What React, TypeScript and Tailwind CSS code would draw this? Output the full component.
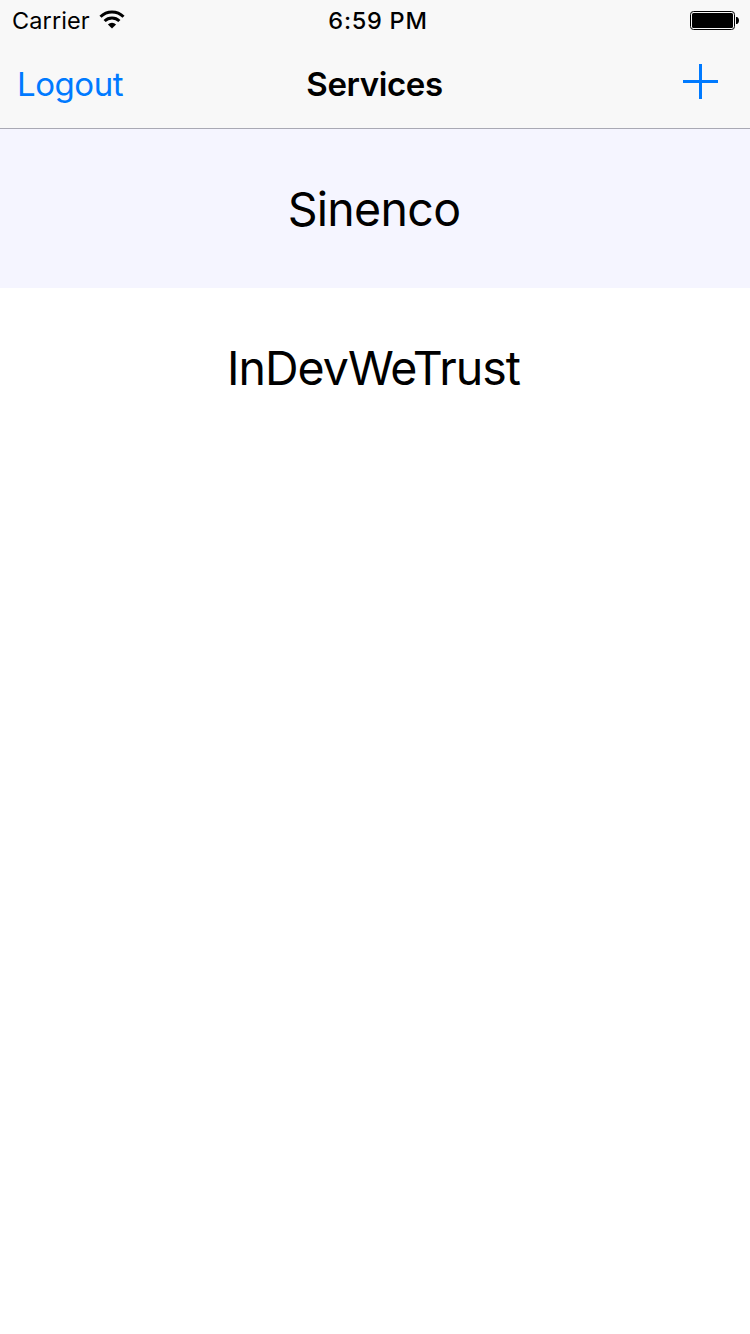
export default function App() {
  return (
    <div className="flex h-[1334px] w-[750px] flex-col bg-white font-['Inter',sans-serif] text-black">
      <header className="flex h-[129px] flex-col border-b border-[#a9a9b4] bg-[#f8f8f8]">
        <div className="grid h-10 grid-cols-[1fr_auto_1fr] items-center pr-[11px] pl-3">
          <div className="flex items-center gap-[9px]">
            <span className="pt-[2px] text-[23.5px] leading-[38px] tracking-[0.1px]">Carrier</span>
            <svg width="26" height="20" viewBox="0 0 26 20" fill="none" stroke="#000" strokeWidth="3">
              <path d="M1.5 6.8a16.3 16.3 0 0 1 23 0" />
              <path d="M5.6 11a10.5 10.5 0 0 1 14.8 0" />
              <path d="M13 18.5l-4.1-4.1a6 6 0 0 1 8.2 0z" fill="#000" stroke="none" />
            </svg>
          </div>
          <span className="pt-[2px] pl-[5px] text-center text-[23.5px] leading-[38px] font-medium tracking-[0.75px]">
            6:59 PM
          </span>
          <svg className="justify-self-end" width="49" height="19" viewBox="0 0 49 19">
            <rect x="0.5" y="0.5" width="44" height="18" rx="3" fill="none" stroke="#000" />
            <rect x="2" y="2" width="41" height="15" rx="1.5" />
            <path d="M46 6h1.2c2.4 1.5 2.4 5.5 0 7H46z" />
          </svg>
        </div>
        <nav className="grid h-[88px] grid-cols-[1fr_auto_1fr] items-center pr-8 pl-[17px]">
          <button className="pt-[2px] text-left text-[33px] tracking-[-0.45px] text-[#007aff]">Logout</button>
          <h1 className="pt-[2px] pl-[14px] text-center text-[33px] font-semibold tracking-[-0.4px]">Services</h1>
          <button className="justify-self-end pb-[6px]" aria-label="Add">
            <svg width="35" height="35" viewBox="0 0 35 35" fill="#007aff">
              <path d="M16 0h3v16h16v3H19v16h-3V19H0v-3h16z" />
            </svg>
          </button>
        </nav>
      </header>
      <ul className="text-center text-[46.5px]">
        <li className="flex h-[159px] items-center justify-center bg-[#f5f5ff] pt-[2px] pr-[2px] tracking-[-0.7px]">
          Sinenco
        </li>
        <li className="flex h-40 items-center justify-center pt-[2px] pr-[3px] tracking-[-1px]">InDevWeTrust</li>
      </ul>
    </div>
  );
}
